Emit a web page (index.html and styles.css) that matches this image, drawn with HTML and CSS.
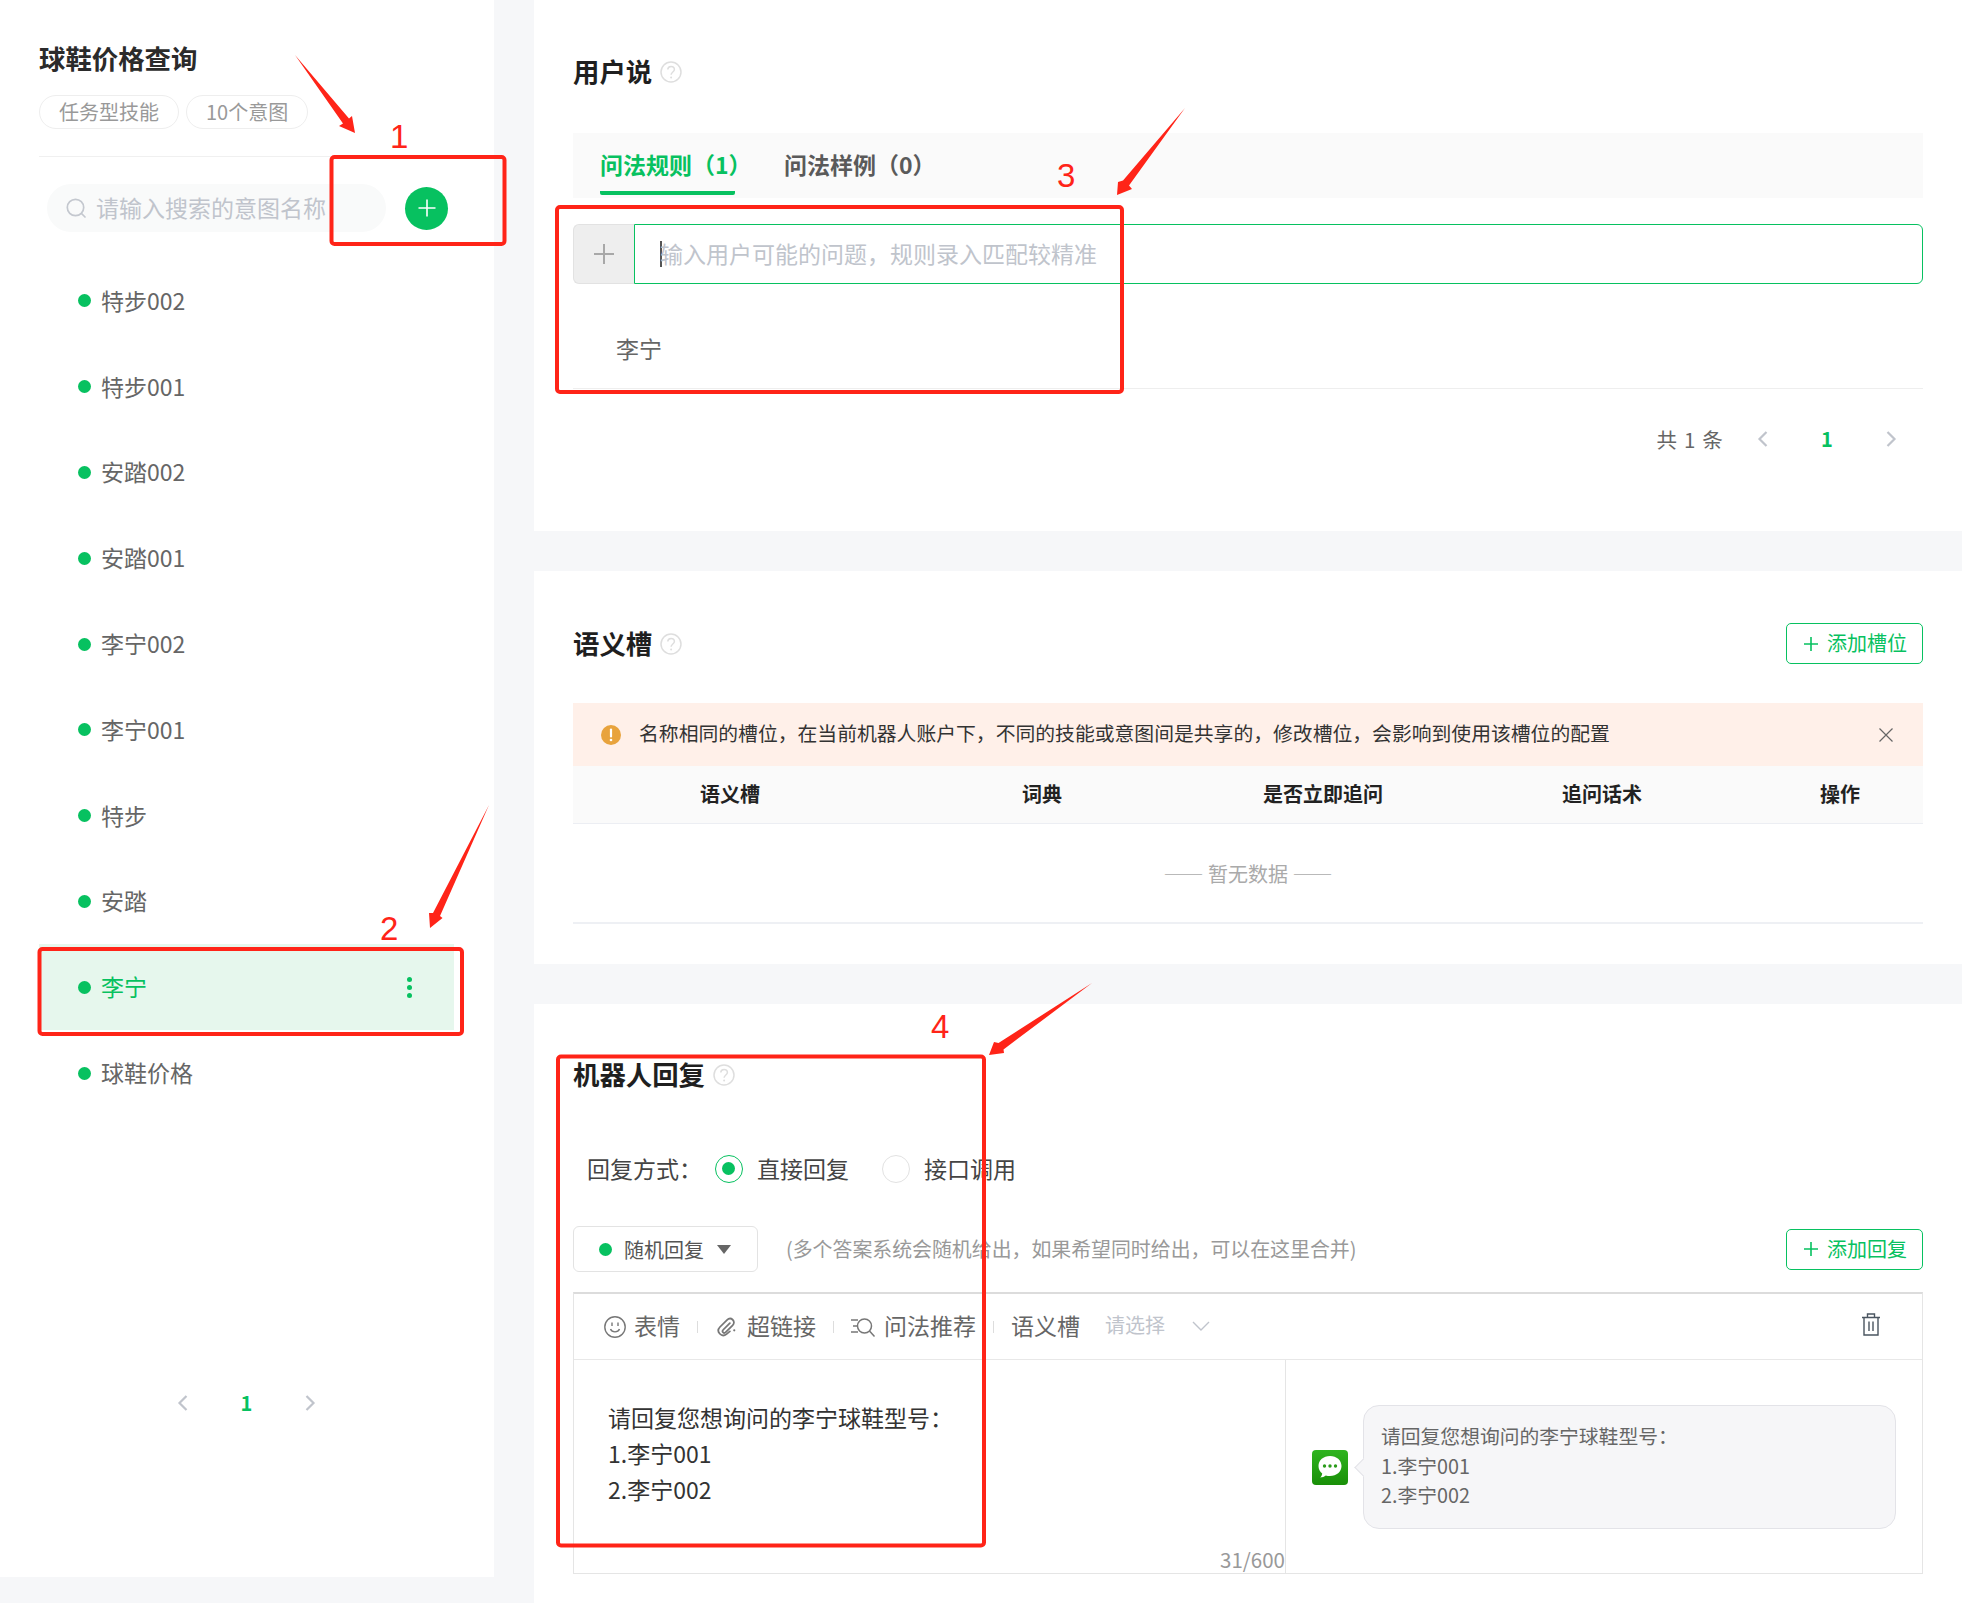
FILE: index.html
```
<!DOCTYPE html>
<html lang="zh-CN">
<head>
<meta charset="utf-8">
<title>球鞋价格查询</title>
<link rel="stylesheet" href="styles.css">
</head>
<body>
<div class="page">
  <aside class="sidebar">
    <h1 class="skill-title">球鞋价格查询</h1>
    <div class="tags"><span class="tag">任务型技能</span><span class="tag">10个意图</span></div>
    <div class="search-row">
      <div class="search">
        <svg class="search-icon" viewBox="0 0 22 22"><circle cx="10.500" cy="10.500" r="8.200" fill="none" stroke="#c4c8cf" stroke-width="1.700"/><path d="M16.500 16.500l3.500 3.500" stroke="#c4c8cf" stroke-width="1.700" stroke-linecap="round"/></svg>
        <span class="search-ph">请输入搜索的意图名称</span>
      </div>
      <button class="add-round"><svg viewBox="0 0 20 20"><path d="M10 1.500v17M1.500 10h17" stroke="#fff" stroke-width="1.600"/></svg></button>
    </div>
    <ul class="intents">
      <li class="intent"><i class="dot"></i>特步002</li>
      <li class="intent"><i class="dot"></i>特步001</li>
      <li class="intent"><i class="dot"></i>安踏002</li>
      <li class="intent"><i class="dot"></i>安踏001</li>
      <li class="intent"><i class="dot"></i>李宁002</li>
      <li class="intent"><i class="dot"></i>李宁001</li>
      <li class="intent"><i class="dot"></i>特步</li>
      <li class="intent"><i class="dot"></i>安踏</li>
      <li class="intent active"><i class="dot"></i>李宁<span class="more"><i></i><i></i><i></i></span></li>
      <li class="intent"><i class="dot"></i>球鞋价格</li>
    </ul>
    <div class="side-pager">
      <svg class="chev" viewBox="0 0 12 18"><path d="M9.500 2L2.500 9l7 7" fill="none" stroke="#c0c4cc" stroke-width="2.200"/></svg>
      <span class="pnum">1</span>
      <svg class="chev" viewBox="0 0 12 18"><path d="M2.500 2l7 7-7 7" fill="none" stroke="#c0c4cc" stroke-width="2.200"/></svg>
    </div>
  </aside>

  <main class="main">
    <section class="panel panel-user">
      <div class="sec-head">
        <h2 class="sec-title">用户说</h2>
        <svg class="help" viewBox="0 0 22 22"><circle cx="11" cy="11" r="10" fill="none" stroke="#dedede" stroke-width="1.500"/><path d="M7.800 8.600c0-4.200 6.600-4.200 6.600-.2 0 2.600-3.300 2.600-3.300 5.400" fill="none" stroke="#dedede" stroke-width="1.500"/><circle cx="11.100" cy="16.400" r="1" fill="#dedede"/></svg>
      </div>
      <div class="tabs">
        <span class="tab on">问法规则（1）</span>
        <span class="tab">问法样例（0）</span>
      </div>
      <div class="rule-input">
        <span class="addon"><svg viewBox="0 0 22 22"><path d="M11 1v20M1 11h20" stroke="#a8a8a8" stroke-width="2"/></svg></span>
        <div class="field"><i class="caret"></i><span class="field-ph">输入用户可能的问题，规则录入匹配较精准</span></div>
      </div>
      <div class="rule-row">李宁</div>
      <div class="pager">
        <span class="total">共 1 条</span>
        <svg class="chev" viewBox="0 0 12 18"><path d="M9.500 2L2.500 9l7 7" fill="none" stroke="#c0c4cc" stroke-width="2.200"/></svg>
        <span class="pnum">1</span>
        <svg class="chev" viewBox="0 0 12 18"><path d="M2.500 2l7 7-7 7" fill="none" stroke="#c0c4cc" stroke-width="2.200"/></svg>
      </div>
    </section>

    <section class="panel panel-slot">
      <div class="sec-head spaced">
        <div class="title-wrap">
          <h2 class="sec-title">语义槽</h2>
          <svg class="help" viewBox="0 0 22 22"><circle cx="11" cy="11" r="10" fill="none" stroke="#dedede" stroke-width="1.500"/><path d="M7.800 8.600c0-4.200 6.600-4.200 6.600-.2 0 2.600-3.300 2.600-3.300 5.400" fill="none" stroke="#dedede" stroke-width="1.500"/><circle cx="11.100" cy="16.400" r="1" fill="#dedede"/></svg>
        </div>
        <button class="btn-add"><svg viewBox="0 0 14 14"><path d="M7 0v14M0 7h14" stroke="#07c160" stroke-width="1.600"/></svg>添加槽位</button>
      </div>
      <div class="alert">
        <svg class="warn" viewBox="0 0 20 20"><circle cx="10" cy="10" r="10" fill="#e8a33d"/><path d="M10 4.500v7" stroke="#fff" stroke-width="2.200" stroke-linecap="round"/><circle cx="10" cy="15" r="1.300" fill="#fff"/></svg>
        <span class="alert-text">名称相同的槽位，在当前机器人账户下，不同的技能或意图间是共享的，修改槽位，会影响到使用该槽位的配置</span>
        <svg class="close" viewBox="0 0 14 14"><path d="M.5.5l13 13M13.500.5l-13 13" stroke="#666" stroke-width="1.200"/></svg>
      </div>
      <div class="thead"><span>语义槽</span><span>词典</span><span>是否立即追问</span><span>追问话术</span><span>操作</span></div>
      <div class="empty">—— 暂无数据 ——</div>
    </section>

    <section class="panel panel-reply">
      <div class="sec-head">
        <h2 class="sec-title">机器人回复</h2>
        <svg class="help" viewBox="0 0 22 22"><circle cx="11" cy="11" r="10" fill="none" stroke="#dedede" stroke-width="1.500"/><path d="M7.800 8.600c0-4.200 6.600-4.200 6.600-.2 0 2.600-3.300 2.600-3.300 5.400" fill="none" stroke="#dedede" stroke-width="1.500"/><circle cx="11.100" cy="16.400" r="1" fill="#dedede"/></svg>
      </div>
      <div class="mode">
        <span class="mode-label">回复方式：</span>
        <span class="radio on"></span><span class="radio-text">直接回复</span>
        <span class="radio"></span><span class="radio-text">接口调用</span>
      </div>
      <div class="strategy">
        <div class="select"><i class="dot"></i><span>随机回复</span><i class="tri"></i></div>
        <span class="hint">(多个答案系统会随机给出，如果希望同时给出，可以在这里合并)</span>
        <button class="btn-add"><svg viewBox="0 0 14 14"><path d="M7 0v14M0 7h14" stroke="#07c160" stroke-width="1.600"/></svg>添加回复</button>
      </div>
      <div class="editor">
        <div class="toolbar">
          <svg class="tool-ic face" viewBox="0 0 22 22"><circle cx="11" cy="11" r="10.200" fill="none" stroke="#777" stroke-width="1.400"/><path d="M8 6.500v3.500M14 6.500v3.500" stroke="#777" stroke-width="1.400"/><path d="M6.500 13c1.500 3.800 7.500 3.800 9 0" fill="none" stroke="#777" stroke-width="1.400"/></svg>
          <span class="tool">表情</span><i class="sep"></i>
          <svg class="tool-ic clip" viewBox="0 0 20 20"><path d="M13.500 6.500L7.500 12.500C5.800 14.300 8 16.500 9.800 14.700L16 8.500C19.500 4.800 14.500.2 10.800 3.700L4.500 10C.5 14.200 6 20 10.500 16.500L13.500 14" fill="none" stroke="#777" stroke-width="1.600" stroke-linecap="round"/><circle cx="17.500" cy="13" r="1" fill="#777"/></svg>
          <span class="tool">超链接</span><i class="sep"></i>
          <svg class="tool-ic lens" viewBox="0 0 26 22"><path d="M1 4h7M3 10h5M1 16h7" stroke="#777" stroke-width="1.400"/><circle cx="14.500" cy="10" r="7" fill="none" stroke="#777" stroke-width="1.500"/><path d="M19.500 15l5 5.500" stroke="#777" stroke-width="1.500"/></svg>
          <span class="tool">问法推荐</span><i class="sep"></i>
          <span class="tool">语义槽</span>
          <span class="tool-select">请选择</span>
          <svg class="tool-chev" viewBox="0 0 18 10"><path d="M1 1l8 8 8-8" fill="none" stroke="#c0c4cc" stroke-width="1.400"/></svg>
          <svg class="trash" viewBox="0 0 20 23"><path d="M1 4.500h18M6.500 4.500V1h7v3.500M3 4.500V22h14V4.500M8 8.500v9.500M12 8.500v9.500" fill="none" stroke="#4a5560" stroke-width="1.400"/></svg>
        </div>
        <div class="editor-body">
          <div class="edit-left">
            <p class="edit-text">请回复您想询问的李宁球鞋型号：<br>1.李宁001<br>2.李宁002</p>
            <span class="counter">31/600</span>
          </div>
          <div class="preview">
            <svg class="chat-ic" viewBox="0 0 36 35"><defs><linearGradient id="cg" x1="0" y1="0" x2="0" y2="1"><stop offset="0" stop-color="#2fb41f"/><stop offset="1" stop-color="#198f08"/></linearGradient></defs><rect width="36" height="35" rx="4" fill="url(#cg)"/><path d="M18 6c-6.600 0-11.500 4.300-11.500 10 0 3 1.400 5.600 3.700 7.400-.1 1.500-.9 3-2 4.100 2.200 0 4.200-.8 5.600-2 1.300.4 2.700.5 4.200.5 6.600 0 11.500-4.300 11.500-10S24.600 6 18 6z" fill="#fff"/><circle cx="12.500" cy="16" r="1.700" fill="#2a9c1a"/><circle cx="18" cy="16" r="1.700" fill="#2a9c1a"/><circle cx="23.500" cy="16" r="1.700" fill="#2a9c1a"/></svg>
            <div class="bubble">请回复您想询问的李宁球鞋型号：<br>1.李宁001<br>2.李宁002</div>
          </div>
        </div>
      </div>
    </section>
  </main>

  <svg class="marks" viewBox="0 0 1962 1603">
    <g fill="none" stroke="#ff2418" stroke-width="4">
      <rect x="331.500" y="157" width="173" height="87" rx="3"/>
      <rect x="39.500" y="949" width="422.500" height="85" rx="3"/>
      <rect x="557" y="207" width="565" height="185" rx="3"/>
      <rect x="558" y="1056.500" width="426" height="489" rx="3"/>
    </g>
    <g fill="#ff2418">
      <polygon points="295,55 349,118.500 352,116 355,133 339,126 343,123.500"/>
      <polygon points="489,805 440,916 442.500,918 430,928 429,913 433,913"/>
      <polygon points="1185,108 1129,185.500 1132,189 1117,195 1118,182 1123,180.500"/>
      <polygon points="1092,983 1003.500,1049.500 1004,1053 989,1055 994,1042 998.500,1043"/>
    </g>
  </svg>
  <span class="mark-num n1">1</span>
  <span class="mark-num n2">2</span>
  <span class="mark-num n3">3</span>
  <span class="mark-num n4">4</span>
</div>
</body>
</html>
```
FILE: styles.css
```
* { box-sizing: border-box; }
html, body { margin: 0; padding: 0; }
body {
  font-family: "Noto Sans CJK SC", "Noto Sans", sans-serif;
  background: #f6f7f9;
  color: #333;
}
h1, h2, p, ul { margin: 0; padding: 0; }
ul { list-style: none; }
i { font-style: normal; display: block; }
button { font-family: inherit; cursor: pointer; }

.page {
  position: relative;
  display: flex;
  gap: 40px;
  width: 1962px;
  height: 1603px;
  overflow: hidden;
}

/* sidebar */
.sidebar {
  width: 494px;
  height: 1577px;
  flex: none;
  background: #fff;
  padding: 40px 0 0 39px;
  display: flex;
  flex-direction: column;
}
.skill-title {
  font-size: 26.400px;
  line-height: 36px;
  font-weight: 700;
  color: #2b2b2b;
}
.tags {
  display: flex;
  gap: 7px;
  margin-top: 19px;
  width: 431px;
  padding-bottom: 27px;
  border-bottom: 1px solid #f0f0f0;
}
.tag {
  height: 34px;
  line-height: 31px;
  padding: 0 19px;
  border: 1px solid #eeeeee;
  border-radius: 17px;
  font-size: 20px;
  color: #999;
}
.search-row {
  display: flex;
  align-items: center;
  margin-top: 27px;
  margin-left: 8px;
}
.search {
  width: 339px;
  height: 48px;
  border-radius: 24px;
  background: #f9fafa;
  display: flex;
  align-items: center;
  padding-left: 18px;
  overflow: hidden;
}
.search-icon { width: 22px; height: 22px; flex: none; }
.search-ph {
  margin-left: 9px;
  padding-bottom: 2px;
  font-size: 23px;
  color: #c0c4cc;
  white-space: nowrap;
}
.add-round {
  width: 43px;
  height: 43px;
  margin-left: 19px;
  padding: 11.500px;
  border: 0;
  border-radius: 50%;
  background: #07c160;
  display: block;
}
.add-round svg { display: block; width: 20px; height: 20px; }
.intents { margin-top: 26px; width: 415px; }
.intent {
  height: 85.800px;
  padding: 0 0 2px 39px;
  display: flex;
  align-items: center;
  font-size: 23px;
  color: #666;
}
.dot {
  width: 13px;
  height: 13px;
  border-radius: 50%;
  background: #07c160;
  flex: none;
}
.intent .dot { margin: 2px 10px 0 0; }
.intent.active { background: #e6f7ed; color: #07c160; position: relative; }
.more {
  margin-left: auto;
  margin-right: 42px;
  margin-top: 2px;
  display: flex;
  flex-direction: column;
  gap: 3px;
}
.more i { width: 5px; height: 5px; border-radius: 50%; background: #07c160; }
.side-pager {
  display: flex;
  align-items: center;
  margin-top: 273px;
  margin-left: 138px;
  gap: 51.500px;
}
.chev { width: 12px; height: 18px; display: block; flex: none; }
.pnum { font-size: 20px; font-weight: 700; color: #07c160; width: 12px; text-align: center; line-height: 28px; }

/* main column */
.main {
  flex: 1;
  display: flex;
  flex-direction: column;
  gap: 40px;
  min-width: 0;
}
.panel { background: #fff; padding: 0 39px; flex: none; }
.panel-user { height: 531px; padding-top: 53px; }
.panel-slot { height: 393px; padding-top: 52px; }
.panel-reply { height: 600px; padding-top: 52px; }

.sec-head { display: flex; align-items: center; gap: 8px; }
.sec-head.spaced { justify-content: space-between; }
.title-wrap { display: flex; align-items: center; gap: 8px; }
.sec-title { font-size: 26.400px; line-height: 36px; padding-bottom: 2px; font-weight: 700; color: #1f1f1f; }
.help { width: 22px; height: 22px; display: block; flex: none; }

.tabs {
  height: 65px;
  margin-top: 42px;
  background: #fafafa;
  padding-left: 27px;
  display: flex;
  gap: 49px;
}
.tab {
  height: 62px;
  line-height: 62px;
  font-size: 23px;
  font-weight: 700;
  color: #5a5a5a;
  width: 135px;
  white-space: nowrap;
}
.tab + .tab { width: 150px; }
.tab.on { color: #07c160; border-bottom: 4px solid #07c160; border-radius: 0 0 2px 2px; }

.rule-input { display: flex; height: 60px; margin-top: 26px; }
.addon {
  width: 61px;
  background: #eeeeee;
  border: 1px solid #e2e2e2;
  border-right: 0;
  border-radius: 6px 0 0 6px;
  display: flex;
  align-items: center;
  justify-content: center;
}
.addon svg { width: 22px; height: 22px; display: block; }
.field {
  flex: 1;
  border: 1px solid #07c160;
  border-radius: 0 6px 6px 0;
  display: flex;
  align-items: center;
  padding-left: 25px;
}
.caret { width: 2px; height: 26px; background: #555; margin-right: -2px; flex: none; }
.field-ph { font-size: 23px; padding-bottom: 2px; color: #c0c4cc; white-space: nowrap; }
.rule-row {
  height: 105px;
  padding: 46px 0 0 43px;
  font-size: 23px;
  line-height: 36px;
  color: #666;
  border-bottom: 1px solid #eeeeee;
}
.pager {
  display: flex;
  justify-content: flex-end;
  align-items: center;
  margin-top: 35px;
  padding-right: 26px;
}
.total { font-size: 20.500px; letter-spacing: 1.200px; color: #666; line-height: 30px; margin-right: 33px; }
.pager .pnum { margin: 0 52px; }

.btn-add {
  width: 137px;
  height: 41px;
  background: #fff;
  border: 1.500px solid #07c160;
  border-radius: 5px;
  padding: 0 0 2px 17px;
  display: flex;
  align-items: center;
  font-size: 20px;
  color: #07c160;
  flex: none;
}
.btn-add svg { width: 14px; height: 14px; margin: 2px 9px 0 0; display: block; flex: none; }

.alert {
  height: 63px;
  margin-top: 39px;
  background: #fff0e9;
  display: flex;
  align-items: center;
  padding-left: 28px;
}
.warn { width: 20px; height: 20px; display: block; flex: none; }
.alert-text { margin-left: 18px; padding-bottom: 4px; font-size: 19.820px; color: #333; white-space: nowrap; }
.close { width: 14px; height: 14px; margin-left: auto; margin-right: 30px; display: block; flex: none; }

.thead {
  height: 58px;
  padding-bottom: 2px;
  background: #fafafa;
  border-bottom: 1px solid #eceef3;
  display: grid;
  grid-template-columns: 314px 310px 252px 306px 170px;
  align-items: center;
  text-align: center;
  font-size: 20px;
  font-weight: 700;
  color: #222;
}
.empty {
  height: 100px;
  line-height: 100px;
  text-align: center;
  font-size: 20px;
  color: #aaa;
  border-bottom: 2px solid #eef0f4;
}

.mode {
  display: flex;
  align-items: center;
  height: 36px;
  margin-top: 57px;
  padding-left: 14px;
  font-size: 23px;
  color: #444;
}
.mode-label { width: 128px; flex: none; padding-bottom: 2px; }
.radio {
  width: 28px;
  height: 28px;
  border-radius: 50%;
  border: 1.500px solid #e2e2e2;
  flex: none;
  position: relative;
}
.radio.on { border-color: #07c160; }
.radio.on::after {
  content: "";
  position: absolute;
  left: 6px;
  top: 6px;
  width: 13px;
  height: 13px;
  border-radius: 50%;
  background: #07c160;
}
.radio-text { margin-left: 14px; padding-bottom: 2px; width: 125px; flex: none; }
.radio-text:last-child { width: auto; }

.strategy { display: flex; align-items: center; height: 46px; margin-top: 39px; }
.select {
  width: 185px;
  height: 46px;
  border: 1.500px solid #e3e3e3;
  border-radius: 6px;
  display: flex;
  align-items: center;
  padding-left: 25px;
  font-size: 20px;
  color: #555;
  flex: none;
}
.select .dot { margin-right: 12px; }
.tri {
  width: 0;
  height: 0;
  margin-left: 13px;
  border-left: 7px solid transparent;
  border-right: 7px solid transparent;
  border-top: 9px solid #666;
}
.hint { margin-left: 28px; padding-bottom: 2px; font-size: 19.900px; color: #999; white-space: nowrap; }
.strategy .btn-add { margin-left: auto; }

.editor {
  height: 282px;
  margin-top: 20px;
  border: 1px solid #e5e5e5;
  border-top: 2px solid #dcdcdc;
}
.toolbar {
  height: 66px;
  border-bottom: 1px solid #e8e8e8;
  display: flex;
  align-items: center;
  padding-left: 30px;
}
.tool-ic { display: block; flex: none; height: 22px; width: 22px; margin-right: 8px; }
.tool-ic.clip { height: 22px; width: 22px; margin: 0 10px 0 0; }
.tool-ic.lens { width: 26px; margin: 0 8px 0 -1px; }
.tool { font-size: 23px; color: #666; white-space: nowrap; line-height: 30px; padding-bottom: 4px; }
.sep { width: 1px; height: 12px; background: #ddd; margin: 0 17px; flex: none; }
.tool-select { margin-left: 25px; padding-bottom: 4px; font-size: 20px; color: #c0c4cc; }
.tool-chev { width: 18px; height: 10px; margin: 0 0 1px 27px; display: block; flex: none; }
.trash { width: 20px; height: 23px; margin: 0 41px 4px auto; display: block; flex: none; }

.editor-body { display: flex; height: 214px; }
.edit-left {
  width: 712px;
  border-right: 1px solid #e5e5e5;
  padding: 39px 0 0 34px;
  position: relative;
  flex: none;
}
.edit-text { font-size: 23px; line-height: 36px; color: #333; }
.counter {
  position: absolute;
  right: 0;
  bottom: 0;
  font-size: 20.500px;
  line-height: 30px;
  color: #999;
}
.preview { flex: 1; display: flex; align-items: center; padding-left: 26px; }
.chat-ic { width: 36px; height: 35px; display: block; flex: none; }
.bubble {
  position: relative;
  width: 533px;
  height: 124px;
  margin-left: 15px;
  padding: 15px 0 0 17px;
  background: #f6f6f8;
  border: 1px solid #e3e3e8;
  border-radius: 16px;
  font-size: 19.800px;
  line-height: 29.500px;
  color: #666;
}
.bubble::before {
  content: "";
  position: absolute;
  left: -7px;
  top: 55px;
  width: 12px;
  height: 12px;
  background: #f6f6f8;
  border-left: 1px solid #e3e3e8;
  border-bottom: 1px solid #e3e3e8;
  transform: rotate(45deg);
}

/* annotation layer drawn over the screenshot */
.marks {
  position: absolute;
  left: 0;
  top: 0;
  width: 1962px;
  height: 1603px;
  pointer-events: none;
}
.mark-num {
  position: absolute;
  font-family: "Liberation Sans", sans-serif;
  font-size: 33px;
  line-height: 36px;
  color: #ff2418;
}
.n1 { left: 390px; top: 119px; }
.n2 { left: 380px; top: 911px; }
.n3 { left: 1057px; top: 158px; }
.n4 { left: 931px; top: 1009px; }
```
